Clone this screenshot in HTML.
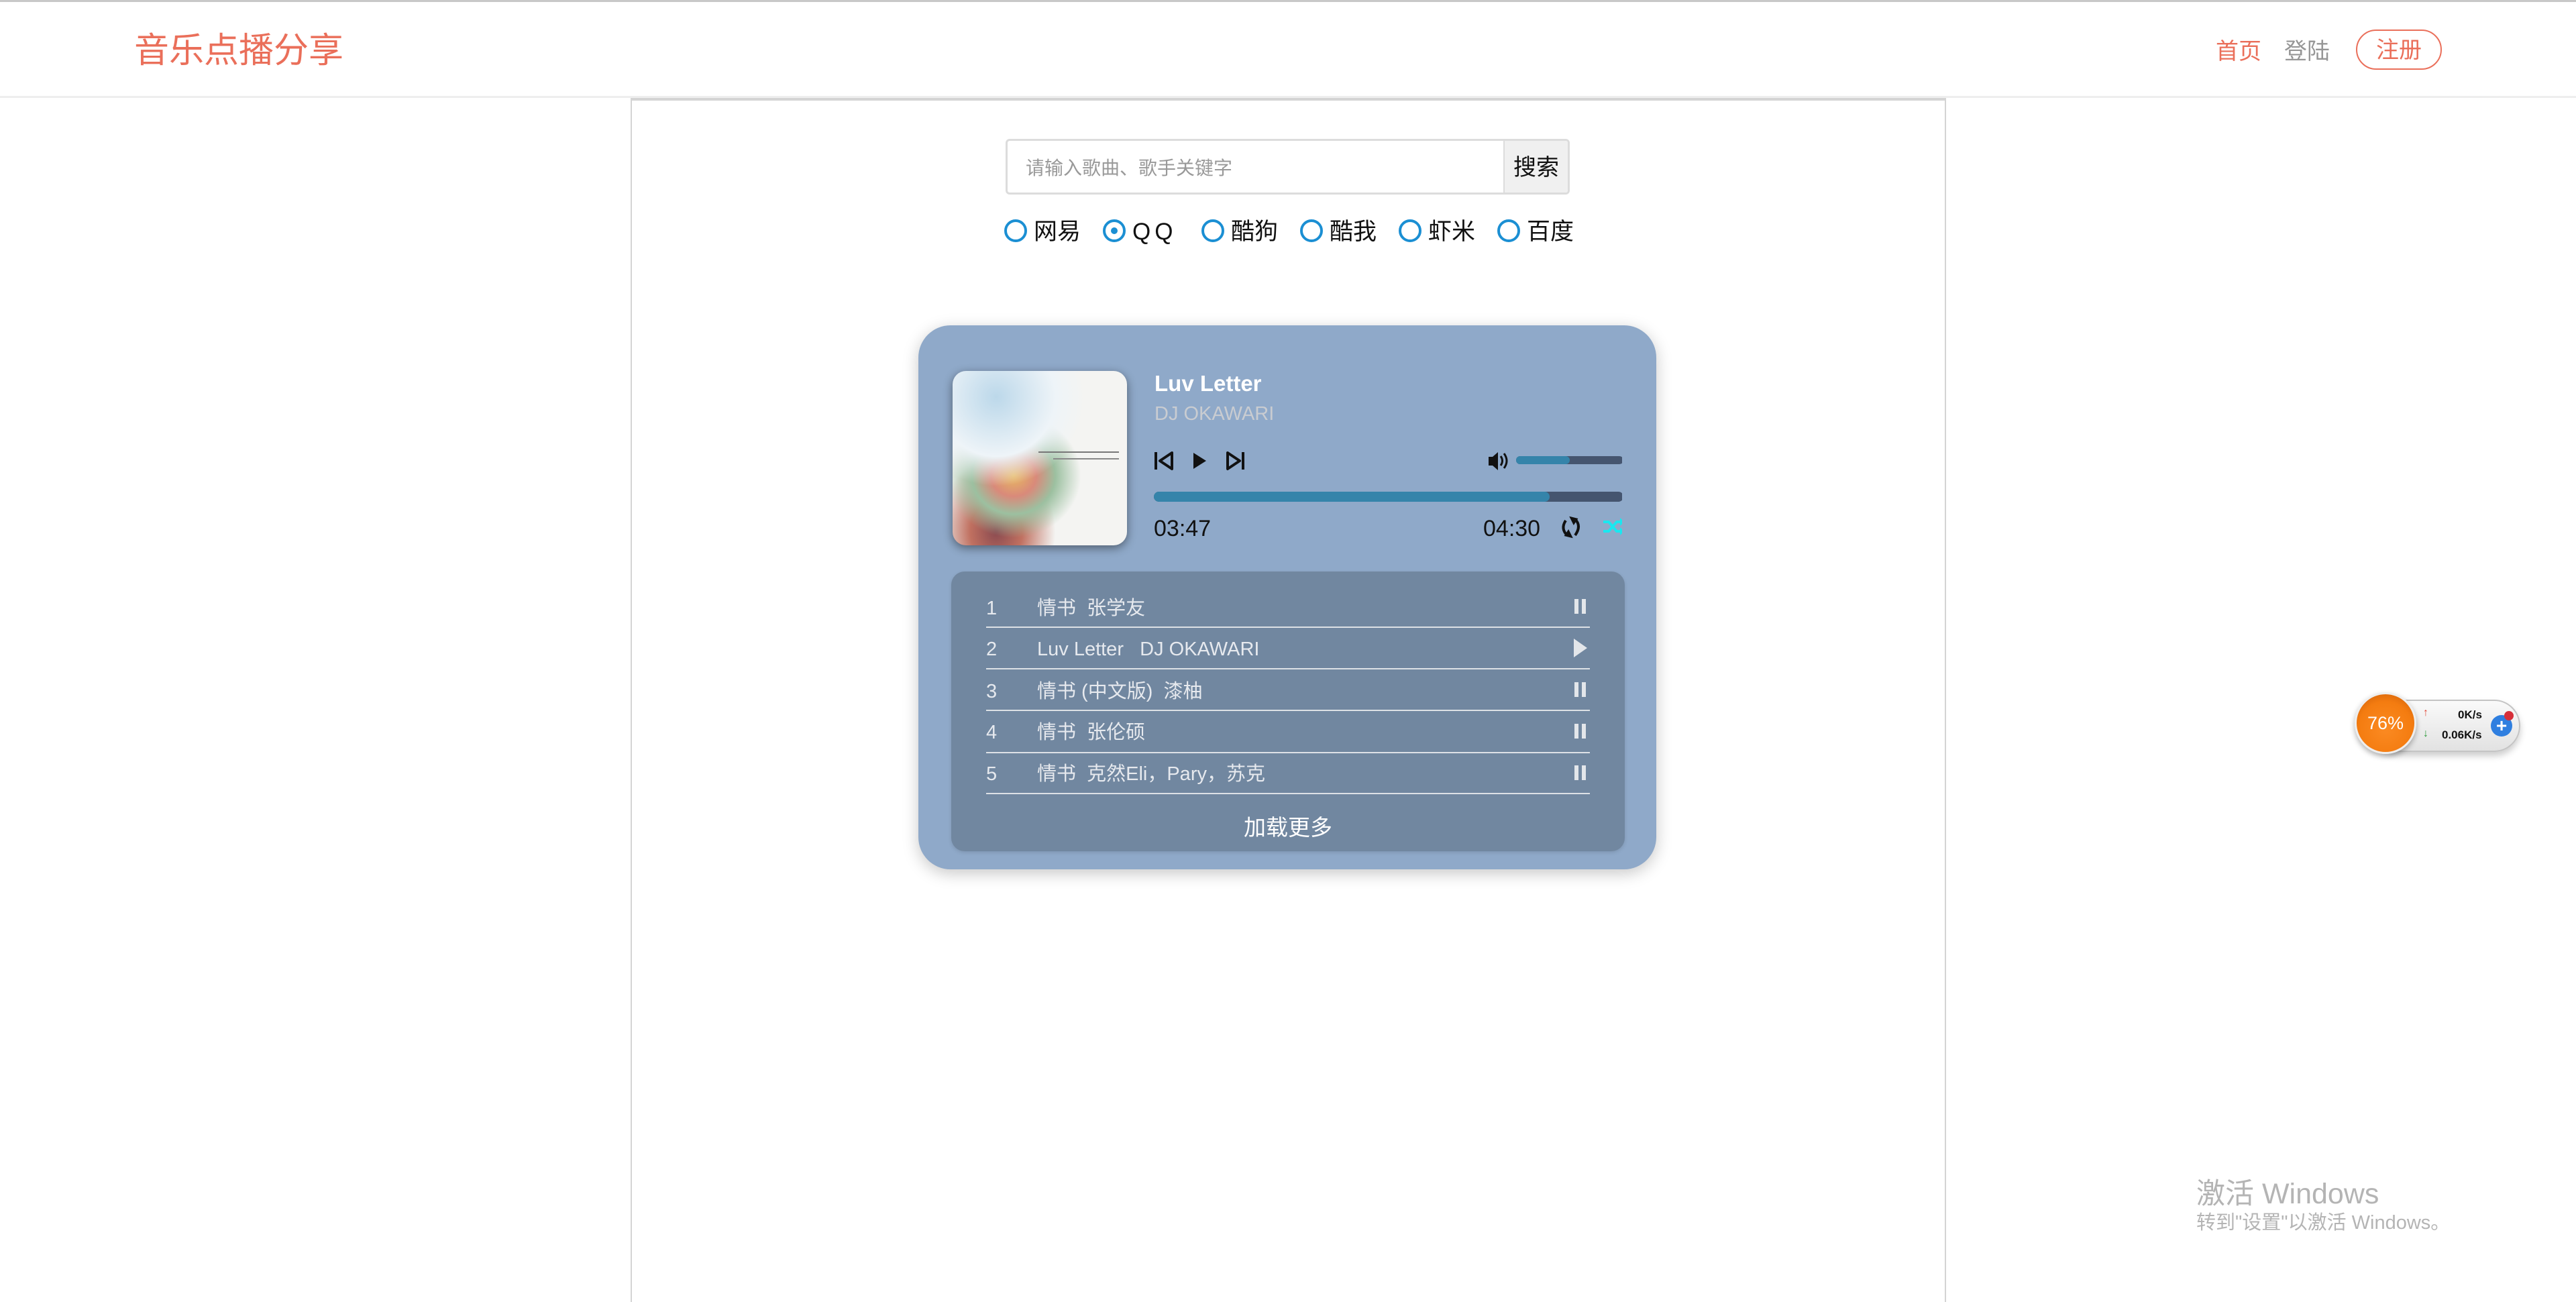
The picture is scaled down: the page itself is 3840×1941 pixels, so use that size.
<!DOCTYPE html>
<html style="width:3840px;height:1941px;overflow:hidden"><head><meta charset="utf-8"><style>
*{margin:0;padding:0;box-sizing:border-box}
body{width:3840px;height:1941px;background:#fff;position:relative;overflow:hidden;font-family:"Liberation Sans","Noto Sans CJK SC",sans-serif}
.a{position:absolute;white-space:nowrap}
.row{position:absolute;left:1470px;width:900px;height:2px;background:#dde1e6}
.rt{position:absolute;color:#e6e9ee;font-size:29px;line-height:30px}
.radio{position:absolute;top:327px;width:34px;height:34px;border:4px solid #1b8fd3;border-radius:50%}
.rl{position:absolute;top:326px;font-size:35px;line-height:40px;color:#111}
.pause{position:absolute;left:2347px;width:17px;height:22px}
.pause:before,.pause:after{content:"";position:absolute;top:0;width:6px;height:22px;background:#e3e6ea}
.pause:before{left:0}.pause:after{right:0}
</style></head><body>
<div class="a" style="left:0;top:0;width:3840px;height:3px;background:#c8c8c8"></div>
<div class="a" style="left:0;top:143px;width:3840px;height:3px;background:#eee"></div>
<div class="a" style="left:200px;top:46px;font-size:52px;line-height:60px;color:#ea6f5a">音乐点播分享</div>
<div class="a" style="left:3303px;top:57px;font-size:34px;line-height:40px;color:#ea6f5a">首页</div>
<div class="a" style="left:3405px;top:57px;font-size:34px;line-height:40px;color:#969696">登陆</div>
<div class="a" style="left:3512px;top:44px;width:128px;height:60px;border:2px solid #ea6f5a;border-radius:30px;color:#ea6f5a;font-size:34px;line-height:58px;text-align:center">注册</div>

<div class="a" style="left:940px;top:146px;width:1961px;height:1795px;border:2px solid #d4d4d4;border-top:4px solid #d4d4d4;border-bottom:none"></div>

<div class="a" style="left:1499px;top:207px;width:841px;height:83px;border:3px solid #dcdcdc;border-radius:6px;background:#fff"></div>
<div class="a" style="left:2241px;top:210px;width:96px;height:77px;background:#f0f0f0;border-left:2px solid #dcdcdc;border-radius:0 4px 4px 0;font-size:34px;line-height:80px;text-align:center;color:#111">搜索</div>
<div class="a" style="left:1529px;top:234px;font-size:28px;line-height:34px;color:#999">请输入歌曲、歌手关键字</div>

<div class="radio" style="left:1497px"></div><div class="rl" style="left:1541px">网易</div>
<div class="radio" style="left:1644px"><div style="position:absolute;left:8px;top:8px;width:10px;height:10px;border-radius:50%;background:#1b8fd3"></div></div><div class="rl" style="left:1688px;letter-spacing:6px">QQ</div>
<div class="radio" style="left:1791px"></div><div class="rl" style="left:1835px">酷狗</div>
<div class="radio" style="left:1938px"></div><div class="rl" style="left:1982px">酷我</div>
<div class="radio" style="left:2085px"></div><div class="rl" style="left:2129px">虾米</div>
<div class="radio" style="left:2232px"></div><div class="rl" style="left:2276px">百度</div>

<div class="a" style="left:1369px;top:485px;width:1100px;height:811px;background:#8fa9c9;border-radius:48px;box-shadow:0 6px 24px rgba(0,0,0,.22)"></div>
<div class="a" style="left:1420px;top:553px;width:260px;height:260px;border-radius:20px;box-shadow:0 4px 14px rgba(0,0,0,.45);overflow:hidden;background:radial-gradient(circle at 25% 15%,#bcd8ea 0,#eef4f8 30%,transparent 45%),radial-gradient(ellipse at 35% 60%,#e8b860 0,#d98a7a 14%,#9cc0a0 26%,transparent 42%),radial-gradient(ellipse at 25% 92%,#8a4a50 0,#c07060 14%,transparent 32%),#f4f4f2">
<div style="position:absolute;left:128px;top:120px;width:120px;height:2px;background:#777"></div>
<div style="position:absolute;left:150px;top:130px;width:98px;height:2px;background:#888"></div>
</div>
<div class="a" style="left:1721px;top:552px;font-size:33px;font-weight:bold;line-height:40px;color:#fff">Luv Letter</div>
<div class="a" style="left:1721px;top:599px;font-size:29px;line-height:36px;color:#c9ccd1">DJ OKAWARI</div>

<svg class="a" style="left:1718px;top:670px" width="700" height="140" viewBox="0 0 700 140">
<g fill="none" stroke="#111" stroke-width="4" stroke-linejoin="round">
<line x1="5" y1="4" x2="5" y2="30"/><path d="M29 5 L11 17 L29 29 Z"/>
<path d="M112 5 L130 17 L112 29 Z"/><line x1="135" y1="4" x2="135" y2="30"/>
</g>
<path d="M61 5 L80 17 L61 29 Z" fill="#111"/>
<path d="M501 11h6l8-7v27l-8-7h-6z" fill="#111"/>
<path d="M519 10q5 7 0 14M524 6q8 11 0 22" fill="none" stroke="#111" stroke-width="3"/>
<rect x="542" y="10" width="160" height="12" rx="6" fill="#45556f"/>
<rect x="542" y="10" width="80" height="12" rx="6" fill="#3584aa"/>
<rect x="2" y="63" width="700" height="15" rx="7.5" fill="#45556f"/>
<rect x="2" y="63" width="590" height="15" rx="7.5" fill="#3584aa"/>
<path d="M616 106 q-8 12 2 22 M630 104 q10 10 0 24" fill="none" stroke="#111" stroke-width="4"/>
<path d="M624 130 l-8 -2 l4 -6z M624 102 l8 2 l-4 6z" fill="#111" stroke="#111" stroke-width="3"/>
<path d="M672 108 h8 l12 14 h8 M672 122 h8 l12 -14 h8" fill="none" stroke="#19e8f0" stroke-width="4"/>
<path d="M697 102 l6 6 l-6 6z M697 116 l6 6 l-6 6z" fill="#19e8f0"/>
</svg>
<div class="a" style="left:1720px;top:768px;font-size:34px;line-height:40px;color:#111">03:47</div>
<div class="a" style="left:2211px;top:768px;font-size:34px;line-height:40px;color:#111">04:30</div>

<div class="a" style="left:1418px;top:852px;width:1004px;height:417px;background:#7187a0;border-radius:20px;box-shadow:0 2px 6px rgba(0,0,0,.12)"></div>
<div class="rt" style="left:1470px;top:892px">1</div><div class="rt" style="left:1546px;top:892px">情书&nbsp;&nbsp;张学友</div><div class="pause" style="top:893px"></div>
<div class="row" style="top:934px"></div>
<div class="rt" style="left:1470px;top:953px">2</div><div class="rt" style="left:1546px;top:953px">Luv Letter&nbsp;&nbsp;&nbsp;DJ OKAWARI</div>
<svg class="a" style="left:2346px;top:952px" width="20" height="28"><path d="M0 0 L20 14 L0 28Z" fill="#e3e6ea"/></svg>
<div class="row" style="top:996px"></div>
<div class="rt" style="left:1470px;top:1016px">3</div><div class="rt" style="left:1546px;top:1016px">情书 (中文版)&nbsp;&nbsp;漆柚</div><div class="pause" style="top:1017px"></div>
<div class="row" style="top:1058px"></div>
<div class="rt" style="left:1470px;top:1077px">4</div><div class="rt" style="left:1546px;top:1077px">情书&nbsp;&nbsp;张伦硕</div><div class="pause" style="top:1079px"></div>
<div class="row" style="top:1121px"></div>
<div class="rt" style="left:1470px;top:1139px">5</div><div class="rt" style="left:1546px;top:1139px">情书&nbsp;&nbsp;克然Eli，Pary，苏克</div><div class="pause" style="top:1141px"></div>
<div class="row" style="top:1182px"></div>
<div class="a" style="left:1418px;width:1004px;top:1214px;text-align:center;font-size:33px;line-height:40px;color:#fff">加载更多</div>

<div class="a" style="left:3535px;top:1043px;width:222px;height:78px;border-radius:39px;background:linear-gradient(#fafafa,#e2e2e2);border:2px solid #c4c4c4;box-shadow:0 6px 10px rgba(0,0,0,.2)"></div>
<div class="a" style="left:3510px;top:1032px;width:92px;height:92px;border-radius:50%;background:radial-gradient(circle at 50% 60%,#fb8a22 0,#f47c10 60%,#c85a08 100%);border:3px solid #eee;box-shadow:0 4px 8px rgba(0,0,0,.3);color:#fff;font-size:27px;line-height:86px;text-align:center">76%</div>
<div class="a" style="left:3612px;top:1054px;font-size:16px;color:#e04a3a;font-weight:bold">↑</div>
<div class="a" style="left:3612px;top:1085px;font-size:16px;color:#2a9a3a;font-weight:bold">↓</div>
<div class="a" style="left:3664px;top:1056px;font-size:17px;color:#111;font-weight:bold">0K/s</div>
<div class="a" style="left:3640px;top:1086px;font-size:17px;color:#111;font-weight:bold">0.06K/s</div>
<div class="a" style="left:3713px;top:1066px;width:32px;height:32px;border-radius:50%;background:#2f7fe0;color:#fff;font-size:28px;line-height:32px;text-align:center;font-weight:bold">+</div>
<div class="a" style="left:3733px;top:1060px;width:14px;height:14px;border-radius:50%;background:#d6303a"></div>

<div class="a" style="left:3274px;top:1754px;font-size:43px;line-height:52px;color:#b4b4b4">激活 Windows</div>
<div class="a" style="left:3274px;top:1806px;font-size:29px;line-height:34px;color:#b4b4b4">转到"设置"以激活 Windows。</div>
</body></html>
